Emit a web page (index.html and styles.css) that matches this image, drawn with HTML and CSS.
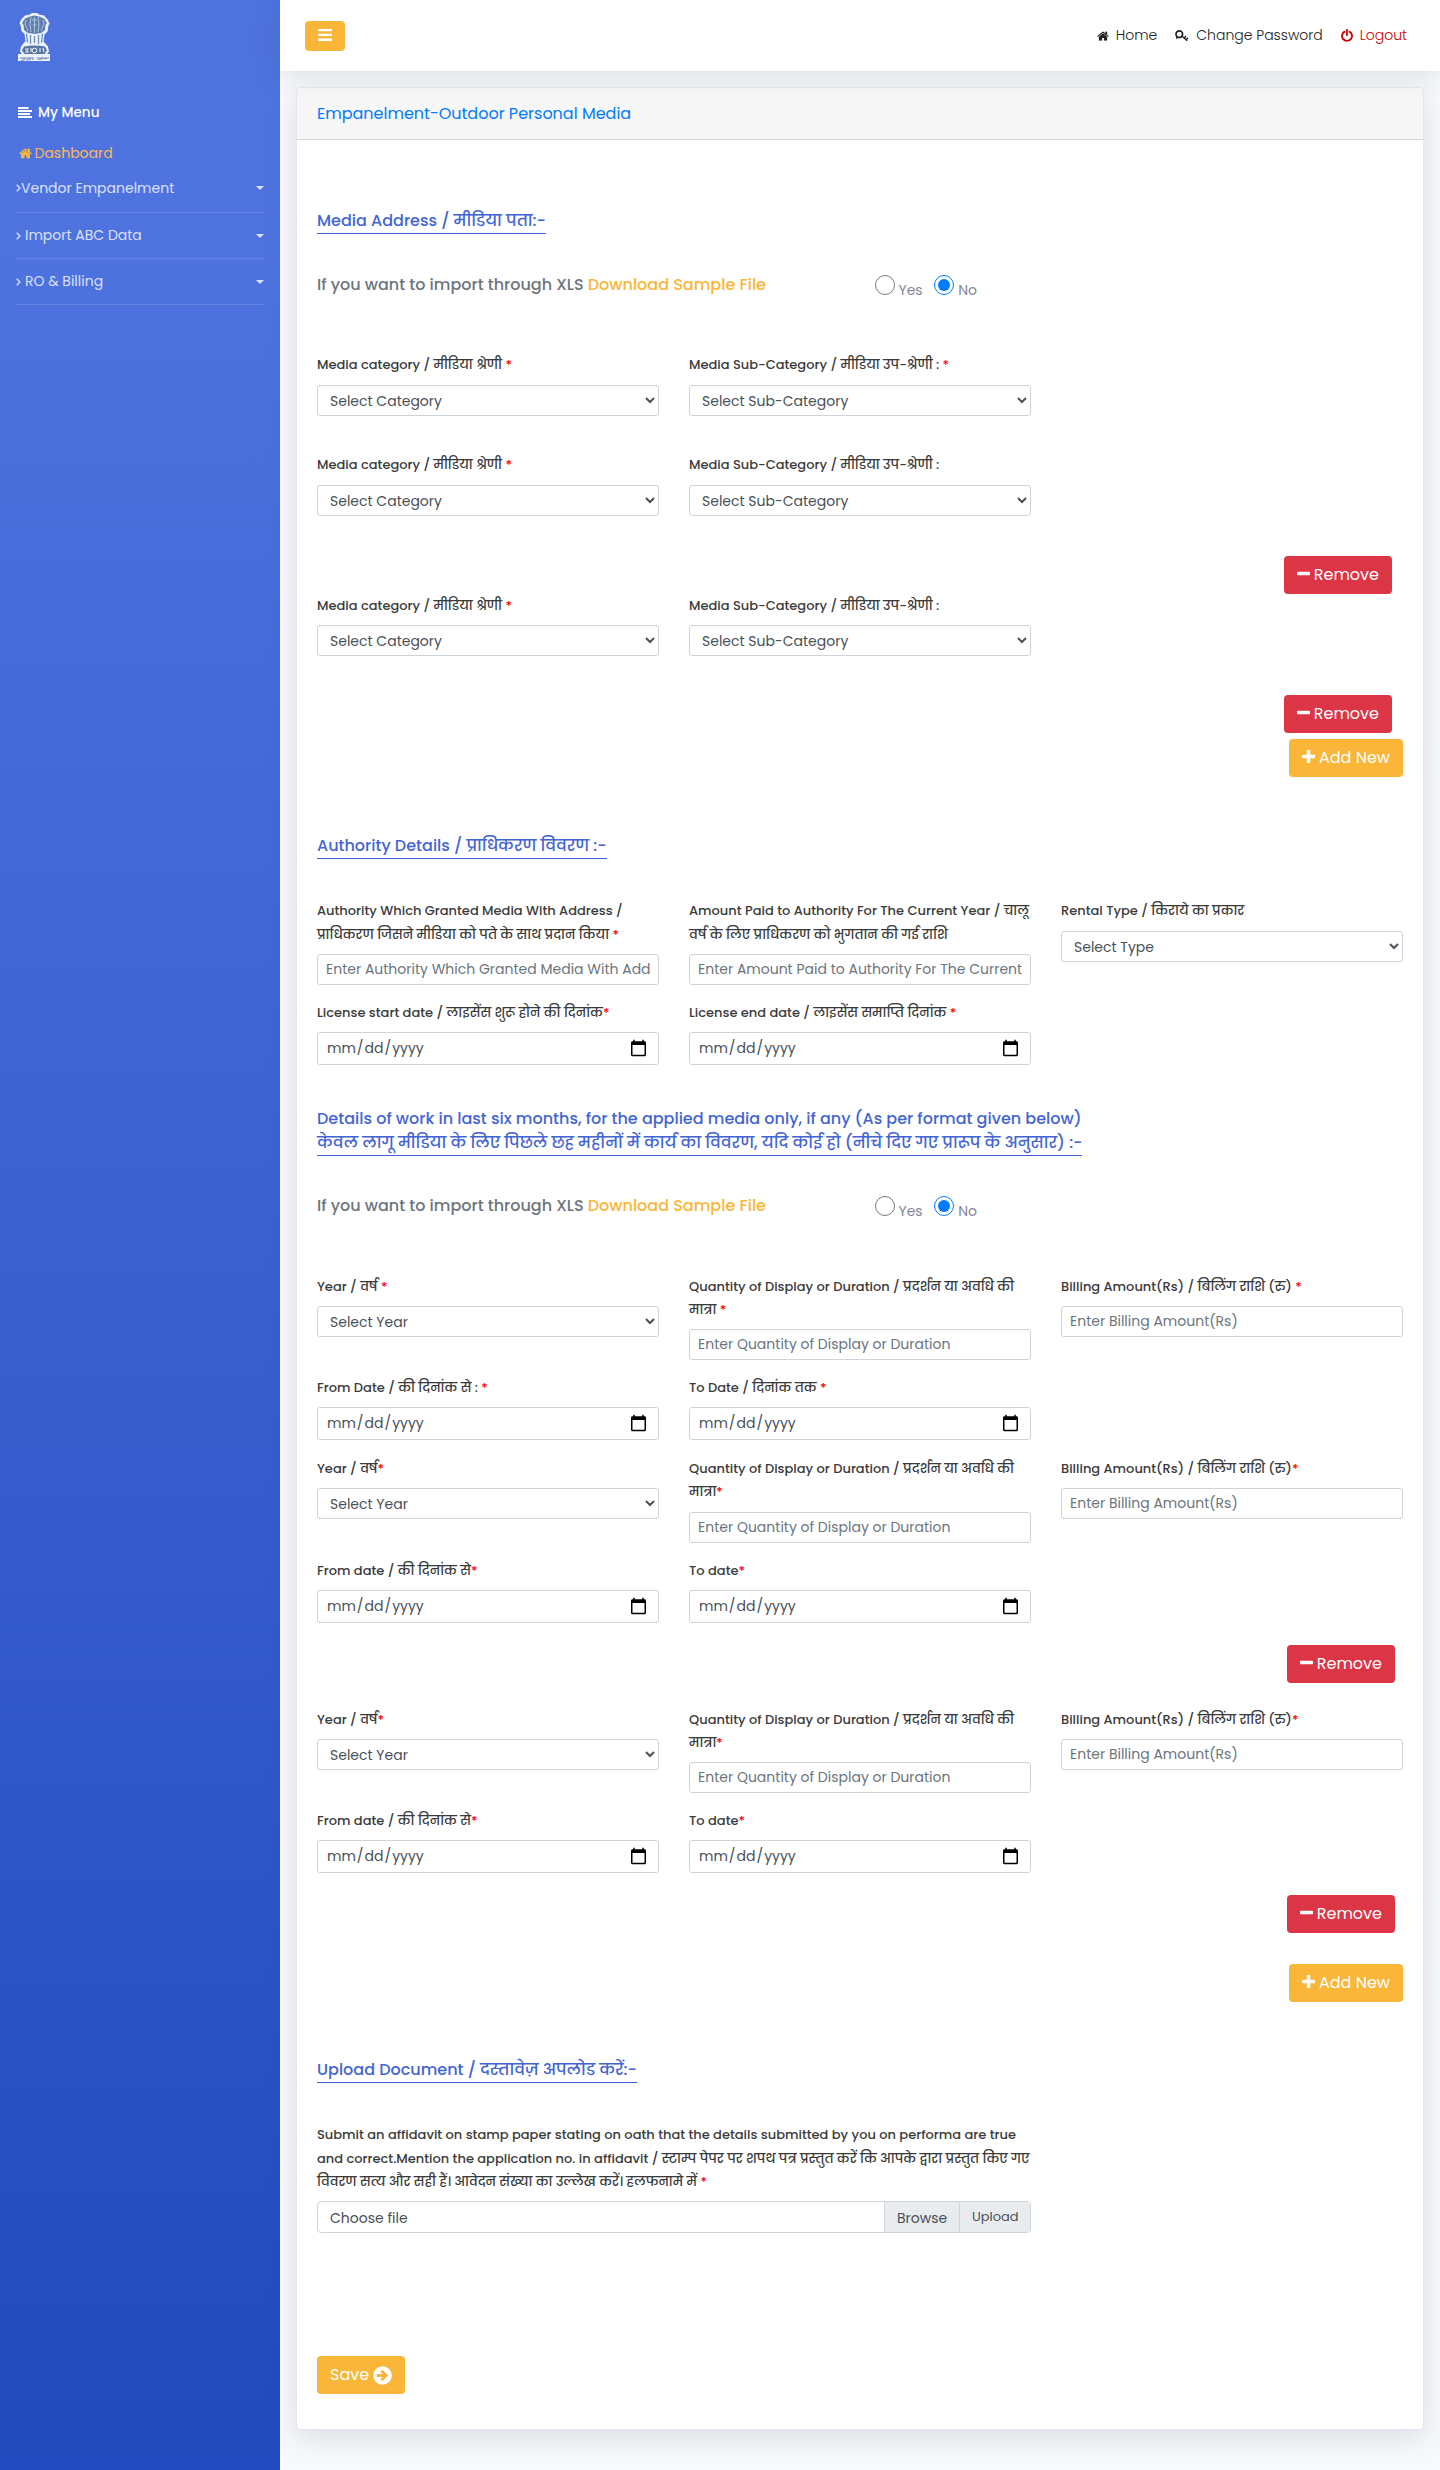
FILE: index.html
```html
<!DOCTYPE html>
<html lang="en">
<head>
<meta charset="utf-8">
<title>Empanelment-Outdoor Personal Media</title>
<link rel="stylesheet" href="styles.css">
</head>
<body>
<svg width="0" height="0" class="defs">
  <symbol id="i-home" viewBox="0 0 1664 1312"><path d="M1408 768v480q0 26-19 45t-45 19H960V928H704v384H320q-26 0-45-19t-19-45V768q0-1 .5-3t.5-3l575-474 575 474q1 2 1 6zm223-69l-62 74q-8 9-21 11h-3q-13 0-21-7L832 200 140 777q-12 8-24 7-13-2-21-11l-62-74q-8-10-7-23.500t11-21.500L756 55q32-26 76-26t76 26l244 204V64q0-14 9-23t23-9h192q14 0 23 9t9 23v408l219 182q10 8 11 21.500t-7 23.500z"/></symbol>
  <symbol id="i-minus" viewBox="0 0 1408 1408"><path d="M1408 608v192q0 40-28 68t-68 28H96q-40 0-68-28T0 800V608q0-40 28-68t68-28h1216q40 0 68 28t28 68z"/></symbol>
  <symbol id="i-plus" viewBox="0 0 1408 1408"><path d="M1408 608v192q0 40-28 68t-68 28H896v416q0 40-28 68t-68 28H608q-40 0-68-28t-28-68V896H96q-40 0-68-28T0 800V608q0-40 28-68t68-28h416V96q0-40 28-68t68-28h192q40 0 68 28t28 68v416h416q40 0 68 28t28 68z"/></symbol>
  <symbol id="i-chev" viewBox="0 0 5 8"><path d="M.7.7L4 4 .7 7.300" fill="none" stroke="currentColor" stroke-width="1.300"/></symbol>
</svg>

<div class="page">
  <aside class="sidebar">
    <svg class="emblem" viewBox="0 0 33 50">
      <path d="M12 1.500l2-1.500h5l2 1.500 5 1 3.500 4 2 4-1 2-1 6-3 3-1 7 4.500 5 1 5-2 2.500h3v7H0v-7h4l-2-2.500 1-5L7.500 28l-1-7-3-3-1-6-1-2 2-4L7 2.500z" fill="#eef3fb"/>
      <path d="M12 3.500l4.500-1 4.500 1 5 2 3 4.500-1.500 2-.5 5-4 3-6.500 1-6.500-1-4-3-.5-5L4 10l3-4.500z" fill="#5f80ae"/>
      <path d="M13 4l-1 7 1 8M16.500 4v16M20 4l1 7-1 8M8 7l-1 4 3 7M25 7l1 4-3 7M14 7h5M14.500 12h4" stroke="#b5c7e0" stroke-width=".9" fill="none"/>
      <path d="M8.500 20.500l1 9M12.500 22v9M16.500 23v7M20.500 22v9M24.500 20.500l-1 9" stroke="#6d8dbe" stroke-width="1.300"/>
      <path d="M6 33.500q10.500-2 21 0l2 4-2.500 3.500h-20L4 37.500z" fill="#55779f"/>
      <path d="M7 36h3l-2 3h3M22 35v4M25 35l1 4M13 35v4" stroke="#e6eefa" stroke-width="1.100" fill="none"/>
      <circle cx="16.500" cy="37.500" r="2.300" fill="#55779f" stroke="#fff" stroke-width="1"/>
      <path d="M2 45h14M18.500 45H31" stroke="#6f86ac" stroke-width="1"/>
      <path d="M3 47.200h2m1-2v2.500m2-1h3m1-2v2.500m2-1h1m5 0h3m1-2v2.500m2-1h3" stroke="#6f86ac" stroke-width="1.100"/>
    </svg>
    <div class="menu-title"><svg class="bars-left" viewBox="0 0 14 11"><path d="M0 0h10.500v2H0zM0 3h14v2H0zM0 6h12v2H0zM0 9h14v2H0z"/></svg>My Menu</div>
    <a class="dash"><svg class="ic-home" viewBox="0 0 1664 1312"><use href="#i-home"/></svg>Dashboard</a>
    <a class="nav first"><svg class="chev"><use href="#i-chev"/></svg>Vendor Empanelment<i class="caret"></i></a>
    <a class="nav spaced"><svg class="chev"><use href="#i-chev"/></svg>Import ABC Data<i class="caret"></i></a>
    <a class="nav spaced"><svg class="chev"><use href="#i-chev"/></svg>RO &amp; Billing<i class="caret"></i></a>
  </aside>

  <div class="content">
    <header class="topbar">
      <button class="toggle"><svg viewBox="0 0 14 12"><path d="M0 0h14v2.300H0zM0 4.800h14v2.300H0zM0 9.600h14v2.300H0z"/></svg></button>
      <nav class="toplinks">
        <a><svg class="ic-home" viewBox="0 0 1664 1312"><use href="#i-home"/></svg>Home</a>
        <a><svg class="ic-key" viewBox="0 0 14 12"><circle cx="4.300" cy="4.200" r="3.300" fill="none" stroke="currentColor" stroke-width="1.700"/><path d="M6.500 5.800l5.800 5M9 8.200l2-2.200M11 10l2-2.200M2.500 7.300l-1.500 1" fill="none" stroke="currentColor" stroke-width="1.400"/></svg>Change Password</a>
        <a class="logout"><svg class="ic-power" viewBox="0 0 12 13"><path d="M3.500 2.600a5 5 0 1 0 5 0M6 .8v5.400" fill="none" stroke="currentColor" stroke-width="1.800" stroke-linecap="round"/></svg>Logout</a>
      </nav>
    </header>

    <main class="card">
      <div class="card-head">Empanelment-Outdoor Personal Media</div>
      <form class="card-body">
        <h2 class="sec sec-first">Media Address / मीडिया पता:-</h2>
        <div class="import after-short">
          <p>If you want to import through XLS <a>Download Sample File</a></p>
          <div class="radios"><input type="radio" name="a"><span>Yes</span><input type="radio" name="a" checked><span>No</span></div>
        </div>
        <div class="row after-import">
          <div><label>Media category / मीडिया श्रेणी <b>*</b></label><select><option>Select Category</option></select></div>
          <div><label>Media Sub-Category / मीडिया उप-श्रेणी : <b>*</b></label><select><option>Select Sub-Category</option></select></div>
        </div>
        <div class="row category">
          <div><label>Media category / मीडिया श्रेणी <b>*</b></label><select><option>Select Category</option></select></div>
          <div><label>Media Sub-Category / मीडिया उप-श्रेणी :</label><select><option>Select Sub-Category</option></select></div>
        </div>
        <div class="actions category-remove"><button class="btn red"><svg><use href="#i-minus"/></svg>Remove</button></div>
        <div class="row">
          <div><label>Media category / मीडिया श्रेणी <b>*</b></label><select><option>Select Category</option></select></div>
          <div><label>Media Sub-Category / मीडिया उप-श्रेणी :</label><select><option>Select Sub-Category</option></select></div>
        </div>
        <div class="actions category-remove last"><button class="btn red"><svg><use href="#i-minus"/></svg>Remove</button></div>
        <div class="actions category-add"><button class="btn amber"><svg><use href="#i-plus"/></svg>Add New</button></div>

        <h2 class="sec sec-authority">Authority Details / प्राधिकरण विवरण :-</h2>
        <div class="row after-sec">
          <div><label>Authority Which Granted Media With Address / प्राधिकरण जिसने मीडिया को पते के साथ प्रदान किया <b>*</b></label><input type="text" placeholder="Enter Authority Which Granted Media With Address"></div>
          <div><label>Amount Paid to Authority For The Current Year / चालू वर्ष के लिए प्राधिकरण को भुगतान की गई राशि</label><input type="text" placeholder="Enter Amount Paid to Authority For The Current Year"></div>
          <div><label>Rental Type / किराये का प्रकार</label><select><option>Select Type</option></select></div>
        </div>
        <div class="row dates">
          <div><label>License start date / लाइसेंस शुरू होने की दिनांक<b>*</b></label><input type="date"></div>
          <div><label>License end date / लाइसेंस समाप्ति दिनांक <b>*</b></label><input type="date"></div>
        </div>

        <h2 class="sec sec-work">Details of work in last six months, for the applied media only, if any (As per format given below)<br>केवल लागू मीडिया के लिए पिछले छह महीनों में कार्य का विवरण, यदि कोई हो (नीचे दिए गए प्रारूप के अनुसार) :-</h2>
        <div class="import">
          <p>If you want to import through XLS <a>Download Sample File</a></p>
          <div class="radios"><input type="radio" name="b"><span>Yes</span><input type="radio" name="b" checked><span>No</span></div>
        </div>
        <div class="row after-import">
          <div><label>Year / वर्ष <b>*</b></label><select><option>Select Year</option></select></div>
          <div><label>Quantity of Display or Duration / प्रदर्शन या अवधि की मात्रा <b>*</b></label><input type="text" placeholder="Enter Quantity of Display or Duration"></div>
          <div><label>Billing Amount(Rs) / बिलिंग राशि (रु) <b>*</b></label><input type="text" placeholder="Enter Billing Amount(Rs)"></div>
        </div>
        <div class="row dates">
          <div><label>From Date / की दिनांक से : <b>*</b></label><input type="date"></div>
          <div><label>To Date / दिनांक तक <b>*</b></label><input type="date"></div>
        </div>
        <div class="row next-year">
          <div><label>Year / वर्ष<b>*</b></label><select><option>Select Year</option></select></div>
          <div><label>Quantity of Display or Duration / प्रदर्शन या अवधि की मात्रा<b>*</b></label><input type="text" placeholder="Enter Quantity of Display or Duration"></div>
          <div><label>Billing Amount(Rs) / बिलिंग राशि (रु)<b>*</b></label><input type="text" placeholder="Enter Billing Amount(Rs)"></div>
        </div>
        <div class="row dates-loose">
          <div><label>From date / की दिनांक से<b>*</b></label><input type="date"></div>
          <div><label>To date<b>*</b></label><input type="date"></div>
        </div>
        <div class="actions year-remove"><button class="btn red"><svg><use href="#i-minus"/></svg>Remove</button></div>
        <div class="row after-remove">
          <div><label>Year / वर्ष<b>*</b></label><select><option>Select Year</option></select></div>
          <div><label>Quantity of Display or Duration / प्रदर्शन या अवधि की मात्रा<b>*</b></label><input type="text" placeholder="Enter Quantity of Display or Duration"></div>
          <div><label>Billing Amount(Rs) / बिलिंग राशि (रु)<b>*</b></label><input type="text" placeholder="Enter Billing Amount(Rs)"></div>
        </div>
        <div class="row dates">
          <div><label>From date / की दिनांक से<b>*</b></label><input type="date"></div>
          <div><label>To date<b>*</b></label><input type="date"></div>
        </div>
        <div class="actions year-remove"><button class="btn red"><svg><use href="#i-minus"/></svg>Remove</button></div>
        <div class="actions year-add"><button class="btn amber"><svg><use href="#i-plus"/></svg>Add New</button></div>

        <h2 class="sec sec-upload">Upload Document / दस्तावेज़ अपलोड करें:-</h2>
        <div class="row after-sec">
          <div class="span-2">
            <label>Submit an affidavit on stamp paper stating on oath that the details submitted by you on performa are true and correct.Mention the application no. in affidavit / स्टाम्प पेपर पर शपथ पत्र प्रस्तुत करें कि आपके द्वारा प्रस्तुत किए गए विवरण सत्य और सही हैं। आवेदन संख्या का उल्लेख करें। हलफनामे में <b>*</b></label>
            <div class="file"><span class="name">Choose file</span><span class="browse">Browse</span><span class="upload">Upload</span></div>
          </div>
        </div>
        <button class="btn amber save" type="button">Save <svg viewBox="0 0 19 19"><circle cx="9.500" cy="9.500" r="9.300"/><path class="arrow" d="M3.800 8.100h6L7.400 5.700l2-2 5.800 5.800-5.800 5.800-2-2 2.400-2.400h-6z"/></svg></button>
      </form>
    </main>
  </div>
</div>
</body>
</html>
```
FILE: styles.css
```css
* { box-sizing: border-box; }
body { margin: 0; background: #f8f9fc; font: 400 14px/21px Poppins, "Noto Sans", sans-serif; color: #333; }
.defs { display: block; position: absolute; }
svg { fill: currentColor; flex: none; }
.page { display: flex; height: 2470px; overflow: hidden; }

.sidebar { width: 280px; flex: none; padding: 13px 16px 0; color: rgba(255,255,255,.8); background: linear-gradient(180deg, #4e73df 10%, #224abe 100%); }
.emblem { display: block; width: 33px; height: 50px; margin-left: 2px; }
.menu-title { display: flex; align-items: center; height: 21px; margin: 39px 0 0 2px; color: #fff; font-weight: 500; font-size: 13.600px; }
.bars-left { width: 14px; height: 11px; margin-right: 6px; }
.dash { display: flex; align-items: center; height: 21px; margin: 20px 0 0 3px; color: #f9b65a; }
.dash .ic-home { width: 13px; height: 10.500px; margin-right: 2.500px; color: #f9b639; }
.nav { display: flex; align-items: center; height: 46px; border-bottom: 1px solid rgba(255,255,255,.12); }
.nav.first { height: 49px; }
.chev { width: 5px; height: 8px; }
.spaced .chev { margin-right: 4px; }
.caret { margin-left: auto; border: 4px solid transparent; border-top-color: currentColor; border-bottom: 0; }

.content { flex: 1; min-width: 0; }
.topbar { position: relative; display: flex; align-items: center; justify-content: space-between; height: 71px; padding: 0 33px 0 25px; background: #fff; box-shadow: 0 2.400px 28px rgba(58,59,69,.15); }
.toggle { width: 40px; height: 30px; padding: 0; border: 0; border-radius: 4px; background: #f9b639; color: #fff; display: flex; align-items: center; justify-content: center; }
.toggle svg { width: 14px; height: 12px; margin-top: -2px; }
.toplinks { display: flex; gap: 18px; font-weight: 300; color: #222; }
.toplinks a { display: flex; align-items: center; gap: 7px; }
.toplinks .ic-home { width: 12px; height: 10px; }
.ic-key { width: 14px; height: 12px; }
.ic-power { width: 12px; height: 13px; }
.toplinks .logout { color: #c00; }

.card { width: 1128px; height: 2343px; margin: 16px 0 0 16px; border: 1px solid #e3e6f0; border-radius: 5px; background: #fff; box-shadow: 0 8px 28px rgba(58,59,69,.15); }
.card-head { height: 52px; padding: 14px 20px 0; border-bottom: 1px solid #d4d5d8; border-radius: 4px 4px 0 0; background: #f7f7f7; font-size: 16px; line-height: 24px; color: #007bff; }
.card-body { display: flow-root; padding: 0 20px; }

.sec { width: fit-content; margin: 0; border-bottom: 1px solid #3f63d2; font: 500 16px/24px Poppins, sans-serif; color: #4365d3; white-space: nowrap; }
.sec-first { margin-top: 69px; }
.sec-authority { margin-top: 57px; }
.sec-work { margin-top: 42px; }
.sec-upload { margin-top: 56px; }

.import { display: flex; height: 24px; margin-top: 38px; }
.import.after-short { margin-top: 39px; }
.import p { width: 558px; margin: 0; font-size: 16px; font-weight: 500; line-height: 24px; color: #6c757d; }
.import a { color: #f9b639; }
.radios { display: flex; align-items: center; color: #858796; }
.radios input { width: 20px; height: 20px; margin: 0; accent-color: #007bff; }
.radios span { margin: 10px 11px 0 4px; }
.radios span:first-of-type { margin-left: 3.500px; margin-right: 11.500px; }

.row { display: grid; grid-template-columns: repeat(3, 342px); gap: 30px; align-items: start; }
.row > div { min-width: 0; }
.row.after-import { margin-top: 56.400px; }
.row.after-sec { margin-top: 40.500px; }
.row.category { margin-top: 37.700px; }
.row.dates { margin-top: 15.500px; }
.row.dates-loose { margin-top: 16.300px; }
.row.next-year { margin-top: 16.500px; }
.row.after-remove { margin-top: 24.800px; }
.span-2 { grid-column: span 2; }
label { display: block; margin-bottom: 8px; font-size: 13px; font-weight: 500; line-height: 23.400px; color: #3b3b3b; }
label b { font-weight: 500; color: #f00; }
select, input[type=text], input[type=date] { display: block; width: 100%; height: 31px; padding: 4px 8px; border: 1px solid #ced4da; border-radius: 3px; background: #fff; font: 400 14px/21px Poppins, sans-serif; color: #495057; }
input[type=date] { height: 33px; }
input::-webkit-calendar-picker-indicator { width: 19px; height: 19px; padding: 0; margin-right: 2px; }
::placeholder { color: #6c757d; opacity: 1; }

.actions { display: flex; justify-content: flex-end; }
.category-remove { margin-top: 40px; padding-right: 11px; }
.category-remove.last { margin-top: 38.600px; }
.category-add { margin-top: 6px; }
.year-remove { margin-top: 21.500px; padding-right: 8px; }
.year-add { margin-top: 31px; }
.btn { display: flex; align-items: center; gap: 4px; height: 38px; padding: 0 13px; border: 0; border-radius: 4px; color: #fff; font: 400 16px/24px Poppins, sans-serif; }
.btn svg { width: 13px; height: 13px; margin-top: -2px; }
.btn.red { background: #dc3545; }
.btn.amber { background: #f9b639; }
.btn.save { margin-top: 123px; }
.save svg { width: 19px; height: 19px; margin: 0; }
.save .arrow { fill: #f9b639; }

.file { display: flex; height: 32px; border: 1px solid #ced4da; border-radius: 4px; overflow: hidden; color: #495057; line-height: 32px; }
.file .name { flex: 1; padding-left: 12px; }
.file .browse { width: 75px; padding-left: 12px; border-left: 1px solid #ced4da; background: #e9ecef; }
.file .upload { width: 71px; padding-left: 12px; border-left: 1px solid #ced4da; background: #e9ecef; font-size: 13px; line-height: 29px; }
```
